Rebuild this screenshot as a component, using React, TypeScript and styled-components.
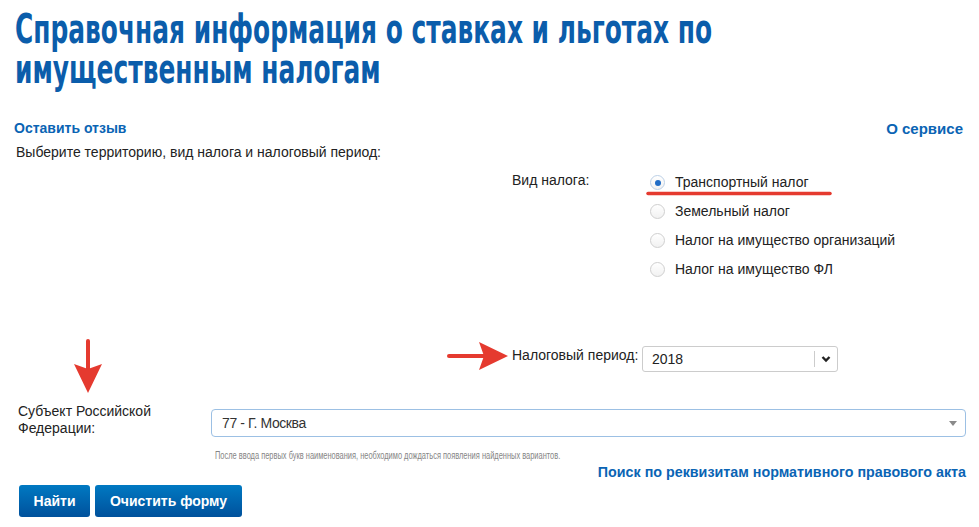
import React from "react";
import styled, { createGlobalStyle } from "styled-components";

const GlobalStyle = createGlobalStyle`
    html, body {
        margin: 0;
        padding: 0;
        background: #fff;
    }
    body {
        font-family: "Liberation Sans", Arial, sans-serif;
        font-size: 14px;
        color: #222;
    }
`

const Page = styled.div`
    position: relative;
    width: 979px;
    height: 527px;
    box-sizing: border-box;
    padding: 0 13px 0 14px;
    overflow: hidden;
`

const TitleWrap = styled.div`
    padding: 9px 0 0 1px;
`

const Title = styled.h1`
    margin: 0;
    font-family: "DejaVu Sans Condensed", "DejaVu Sans", sans-serif;
    font-stretch: condensed;
    font-weight: bold;
    font-size: 41px;
    line-height: 40px;
    color: #0b5dab;
    white-space: nowrap;
    transform: scaleX(0.675);
    transform-origin: 0 0;
    span {
        display: block;
    }
`

const LinksRow = styled.div`
    display: flex;
    justify-content: space-between;
    align-items: center;
    margin-top: 31px;
    height: 16px;
`

const Link = styled.a<{ $size?: number }>`
    font-size: ${({ $size }) => $size || 14}px;
    font-weight: bold;
    color: #0a64b4;
    text-decoration: none;
    cursor: pointer;
`

const ServiceLink = styled(Link)`
    margin-right: 3px;
`

const Intro = styled.p`
    margin: 8px 0 0 2px;
    line-height: 17px;
`

const TaxGrid = styled.div`
    display: grid;
    grid-template-columns: 130px 1fr;
    row-gap: 62px;
    margin: 11px 0 0 498px;
    line-height: 17px;
`

const Label = styled.div<{ $top?: number }>`
    padding-top: ${({ $top }) => $top || 0}px;
`

const RadioList = styled.div`
    display: flex;
    flex-direction: column;
    margin-top: -4px;
    padding-left: 8px;
`

const RadioRow = styled.label`
    display: flex;
    align-items: center;
    gap: 10px;
    height: 29px;
    cursor: pointer;
`

const RadioCircle = styled.span<{ $checked: boolean }>`
    position: relative;
    width: 15px;
    height: 15px;
    box-sizing: border-box;
    border-radius: 50%;
    border: 1px solid ${({ $checked }) => ($checked ? "#bcd0e6" : "#cfcfcf")};
    background: linear-gradient(#ffffff, #f1f1f1);
    flex-shrink: 0;
    &::after {
        content: "";
        display: ${({ $checked }) => ($checked ? "block" : "none")};
        position: absolute;
        left: 3.5px;
        top: 3.5px;
        width: 6px;
        height: 6px;
        border-radius: 50%;
        background: #1f6cc6;
    }
`

const PeriodSelect = styled.div`
    display: flex;
    align-items: center;
    width: 196px;
    height: 26px;
    box-sizing: border-box;
    border: 1px solid #cccccc;
    border-radius: 3px;
    padding-left: 9px;
    font-size: 14px;
    .value {
        flex: 1;
        padding-top: 1px;
    }
    .sep {
        width: 1px;
        height: 16px;
        background: #cccccc;
    }
    .chev {
        display: flex;
        justify-content: center;
        width: 22px;
    }
`

const SubjectGrid = styled.div`
    display: grid;
    grid-template-columns: 197px 1fr;
    margin-top: 31px;
    line-height: 17px;
`

const SubjectLabel = styled.div`
    padding: 0 24px 0 4px;
`

const SubjectSelect = styled.div`
    display: flex;
    align-items: center;
    justify-content: space-between;
    margin-top: 6px;
    height: 28px;
    box-sizing: border-box;
    border: 1px solid #9cc0e4;
    border-radius: 4px;
    padding: 0 8px 0 10px;
    font-size: 14px;
    color: #333;
    letter-spacing: -0.4px;
`

const Caret = styled.span`
    width: 0;
    height: 0;
    border-left: 4px solid transparent;
    border-right: 4px solid transparent;
    border-top: 5px solid #8a8a8a;
`

const Hint = styled.div`
    margin: 12px 0 0 201px;
    font-size: 10.5px;
    line-height: 12px;
    color: #858585;
    white-space: nowrap;
    transform: scaleX(0.71);
    transform-origin: 0 0;
`

const SearchLinkRow = styled.div`
    display: flex;
    justify-content: flex-end;
    align-items: center;
    margin-top: 3px;
    height: 16px;
`

const Buttons = styled.div`
    display: flex;
    gap: 5px;
    margin: 5px 0 0 5px;
`

const Button = styled.button<{ $width: number }>`
    width: ${({ $width }) => $width}px;
    height: 32px;
    border: none;
    border-radius: 3px;
    background: linear-gradient(#0079c2, #00519c);
    color: #fff;
    font-family: "Liberation Sans", Arial, sans-serif;
    font-weight: bold;
    font-size: 14px;
    cursor: pointer;
`

const Marks = styled.svg`
    position: absolute;
    left: 0;
    top: 0;
    pointer-events: none;
`

const taxes = [
    "Транспортный налог",
    "Земельный налог",
    "Налог на имущество организаций",
    "Налог на имущество ФЛ",
];

export default function App(): JSX.Element {
    const [tax, setTax] = React.useState(0);
    return (
        <Page>
            <GlobalStyle />
            <TitleWrap>
                <Title>
                    <span>Справочная информация о ставках и льготах по</span>
                    <span>имущественным налогам</span>
                </Title>
            </TitleWrap>
            <LinksRow>
                <Link>Оставить отзыв</Link>
                <ServiceLink $size={15}>О сервисе</ServiceLink>
            </LinksRow>
            <Intro>Выберите территорию, вид налога и налоговый период:</Intro>
            <TaxGrid>
                <Label>Вид налога:</Label>
                <RadioList>
                    {taxes.map((t, i) => (
                        <RadioRow key={t} onClick={() => setTax(i)}>
                            <RadioCircle $checked={tax === i} />
                            {t}
                        </RadioRow>
                    ))}
                </RadioList>
                <Label $top={1}>Налоговый период:</Label>
                <PeriodSelect>
                    <span className="value">2018</span>
                    <span className="sep" />
                    <span className="chev">
                        <svg width="10" height="8" viewBox="0 0 10 8">
                            <path d="M1.5 2 L5 5.5 L8.5 2" fill="none" stroke="#222" strokeWidth="2.4" />
                        </svg>
                    </span>
                </PeriodSelect>
            </TaxGrid>
            <SubjectGrid>
                <SubjectLabel>Субъект Российской Федерации:</SubjectLabel>
                <SubjectSelect>
                    <span>77 - Г. Москва</span>
                    <Caret />
                </SubjectSelect>
            </SubjectGrid>
            <Hint>После ввода первых букв наименования, необходимо дождаться появления найденных вариантов.</Hint>
            <SearchLinkRow>
                <Link $size={14.3}>Поиск по реквизитам нормативного правового акта</Link>
            </SearchLinkRow>
            <Buttons>
                <Button $width={71}>Найти</Button>
                <Button $width={147}>Очистить форму</Button>
            </Buttons>
            <Marks width="979" height="527" viewBox="0 0 979 527">
                <line x1="648" y1="193.5" x2="830" y2="193.5" stroke="#e53a2f" strokeWidth="3.5" strokeLinecap="round" />
                <line x1="449" y1="356" x2="484" y2="356" stroke="#e53a2f" strokeWidth="4" strokeLinecap="round" />
                <polygon points="479,342 508,356 479,370 484,356" fill="#e53a2f" />
                <line x1="88" y1="341" x2="88" y2="369" stroke="#e53a2f" strokeWidth="4" strokeLinecap="round" />
                <polygon points="74,364 88,369 102,364 88,393" fill="#e53a2f" />
            </Marks>
        </Page>
    );
}
